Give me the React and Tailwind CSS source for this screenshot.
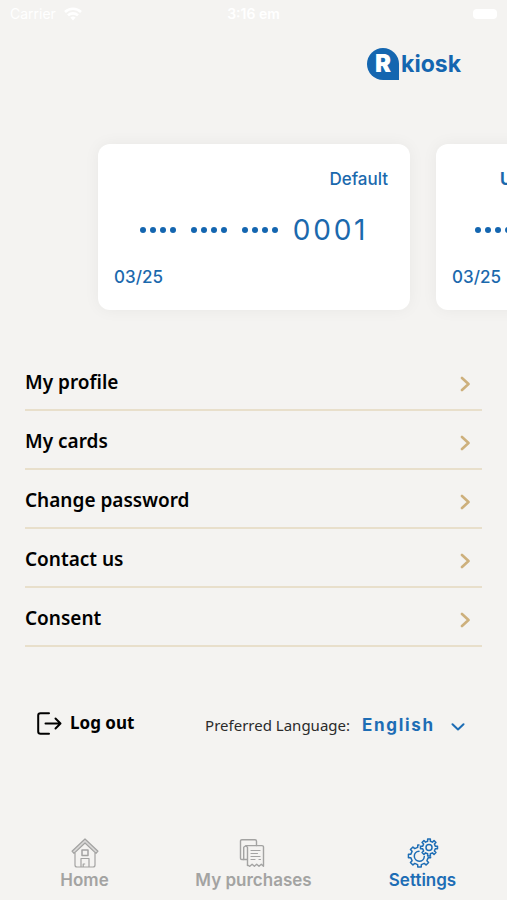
import React, { useState } from 'react';
import clsx from 'clsx';

const cards = [
  { id: 1, label: 'Default', digits: '0001', expiry: '03/25', isDefault: true },
  { id: 2, label: 'U', digits: '0002', expiry: '03/25', isDefault: false }
];

const menuItems = ['My profile', 'My cards', 'Change password', 'Contact us', 'Consent'];

// Closed outline of a cog wheel, centred on cx/cy
const gearPath = (cx, cy, inner, outer, teeth) => {
  const step = (Math.PI * 2) / teeth;
  const point = (radius, angle) =>
    `${(cx + radius * Math.cos(angle)).toFixed(2)} ${(cy + radius * Math.sin(angle)).toFixed(2)}`;
  let d = '';
  for (let i = 0; i < teeth; i++) {
    const a = i * step - Math.PI / 2;
    d += `${i === 0 ? 'M' : 'L'}${point(inner, a - step * 0.27)}`;
    d += `L${point(outer, a - step * 0.2)}L${point(outer, a + step * 0.2)}`;
    d += `L${point(inner, a + step * 0.27)}`;
  }
  return `${d}Z`;
};

const WifiIcon = () => (
  <svg viewBox="0 0 18 14" className="w-[18px] h-[14px]" fill="none" stroke="currentColor" strokeWidth="2.6">
    <path d="M1 5a11.5 11.5 0 0 1 16 0" />
    <path d="M4 8.4a7.2 7.2 0 0 1 10 0" />
    <path d="M6.4 10.6a3.8 3.8 0 0 1 5.2 0L9 13.4z" fill="currentColor" stroke="none" />
  </svg>
);

const HomeIcon = () => (
  <svg viewBox="0 0 28 30" className="w-7 h-[30px]" fill="none" stroke="currentColor" strokeWidth="1.2" strokeLinejoin="round">
    <path d="M14 1 1 13.2l2 2.2L14 5l11 10.4 2-2.2z" fill="currentColor" fillOpacity="0.35" />
    <path d="M4 15v12a2 2 0 0 0 2 2h16a2 2 0 0 0 2-2V15" />
    <rect x="11" y="12" width="6" height="5.5" strokeWidth="1.5" />
    <path d="M10 29v-8.5h8V29M12.2 29v-3h2" />
  </svg>
);

const ReceiptIcon = () => (
  <svg viewBox="0 0 26 30" className="w-[26px] h-[30px] mr-1" fill="none" stroke="currentColor" strokeWidth="1.4" strokeLinejoin="round" strokeLinecap="round">
    <path d="M4.700 21.500H2.800A1.300 1.300 0 0 1 1.500 20.200V3A1.300 1.300 0 0 1 2.800 1.700H16A1.500 1.500 0 0 1 17.500 3.200V7.500" />
    <path d="M8.500 27.500V9.500A2 2 0 0 0 4.700 9.500V21.500H8.500" />
    <path d="M6.700 7.600H23A1.500 1.500 0 0 1 24.500 9.100V28.300L22.300 26.300 20 28.300 17.700 26.300 15.400 28.300 13.100 26.300 10.800 28.300 8.500 27" />
    <path d="M12 12.500h9M12 15.500h6.500M12 18.500h9M12 21.500h4M20 21.500h1.500" strokeWidth="1.2" />
  </svg>
);

const GearsIcon = () => (
  <svg viewBox="0 0 32 30" className="w-8 h-[30px]" fill="none" stroke="currentColor" strokeWidth="1.5" strokeLinejoin="round" strokeLinecap="round">
    <defs>
      <clipPath id="big-gear">
        <path d="M0 0H12.500V10L21 18.500H32V30H0z" />
      </clipPath>
    </defs>
    <g clipPath="url(#big-gear)">
      <path d={gearPath(12.5, 18, 8.8, 11.2, 8)} />
    </g>
    <path d="M12 13.200a5 5 0 1 0 5.300 5.300" />
    <path d={gearPath(22, 9.5, 6.4, 8.6, 8)} />
    <circle cx="22" cy="9.500" r="3" />
  </svg>
);

const LogoutIcon = () => (
  <svg viewBox="0 0 25 23" className="w-[25px] h-[23px]" fill="none" stroke="currentColor" strokeWidth="2" strokeLinecap="round" strokeLinejoin="round">
    <path d="M12 1.200H3.500A2.300 2.300 0 0 0 1.200 3.500V19.500A2.300 2.300 0 0 0 3.500 21.800H12" />
    <path d="M8.500 11.500H23.500M18.500 6.500l5 5-5 5" />
  </svg>
);

const Logo = () => (
  <div className="flex items-center text-[#1466b0]">
    <div className="flex items-center justify-center w-8 h-8 rounded-full rounded-br-none bg-[#1466b0]">
      <span className="font-['Inter'] text-2xl leading-8 font-black text-white">R</span>
    </div>
    <span className="ml-0.5 font-['Inter'] text-[23px] leading-8 font-bold">kiosk</span>
  </div>
);

const Dots = () => (
  <span className="flex gap-1">
    {[0, 1, 2, 3].map((n) => (
      <span key={n} className="w-1.5 h-1.5 rounded-full bg-[#1466b0]" />
    ))}
  </span>
);

const PaymentCard = ({ card }) => (
  <div className="shrink-0 w-[312px] h-[166px] px-4 pt-[23px] rounded-xl bg-white text-[#1b69ad] shadow-[0_0_16px_rgba(0,0,0,0.05)]">
    <p
      className={clsx(
        "font-['Inter'] text-[17px] leading-6",
        card.isDefault ? 'pr-1.5 text-right font-medium' : 'pl-12 font-bold'
      )}
    >
      {card.label}
    </p>
    <div className="flex items-center justify-center gap-[15px] h-10 mt-[19px]">
      <Dots />
      <Dots />
      <Dots />
      <span className="font-['Inter'] text-[28px] leading-10 tracking-widest">{card.digits}</span>
    </div>
    <p className="mt-[15px] font-['Inter'] text-[17px] leading-6 font-medium">{card.expiry}</p>
  </div>
);

const tabs = [
  { name: 'Home', icon: HomeIcon },
  { name: 'My purchases', icon: ReceiptIcon },
  { name: 'Settings', icon: GearsIcon }
];

const App = () => {
  const [language, setLanguage] = useState('English');
  const [activeTab, setActiveTab] = useState('Settings');

  return (
    <div className="flex flex-col min-h-screen overflow-hidden bg-[#f4f3f1] font-['Noto_Sans',sans-serif] text-black">
      {/* Status bar */}
      <div className="grid grid-cols-3 items-center h-7 px-2.5 font-['Inter'] text-sm text-white">
        <div className="flex items-center gap-2">
          <span>Carrier</span>
          <WifiIcon />
        </div>
        <span className="text-center font-semibold">3:16 em</span>
        <div className="justify-self-end w-6 h-2.5 rounded-sm bg-white" />
      </div>

      <header className="flex justify-end pt-5 pr-[46px]">
        <Logo />
      </header>

      {/* Saved cards */}
      <section className="flex gap-[26px] mt-16 pl-[98px]">
        {cards.map((card) => (
          <PaymentCard key={card.id} card={card} />
        ))}
      </section>

      {/* Menu */}
      <nav className="flex flex-col mt-[42px] px-[25px]">
        {menuItems.map((item) => (
          <a
            key={item}
            href="#"
            className="flex items-center justify-between h-[59px] pt-0.5 pr-3 border-b-2 border-[#e8dfcb] text-[19px] leading-6 font-semibold"
          >
            {item}
            <svg viewBox="0 0 10 16" className="w-2.5 h-4 mt-1" fill="none" stroke="#cdb07c" strokeWidth="2.600" strokeLinecap="round" strokeLinejoin="round">
              <path d="M2 2l6.500 6L2 14" />
            </svg>
          </a>
        ))}
      </nav>

      <div className="flex items-center justify-between mt-[62px] pl-[37px] pr-10">
        <button className="flex items-center gap-2 text-[17px] leading-6 font-bold">
          <LogoutIcon />
          Log out
        </button>
        <div className="flex items-center pt-1">
          <label htmlFor="language" className="text-[15px] leading-6 text-[#2b2b2b]">
            Preferred Language:
          </label>
          <div className="relative ml-3">
            <select
              id="language"
              value={language}
              onChange={(e) => setLanguage(e.target.value)}
              className="appearance-none pr-8 bg-transparent font-['Inter'] text-[17px] leading-6 font-bold tracking-widest text-[#1d6db5]"
            >
              <option value="English">English</option>
            </select>
            <svg viewBox="0 0 14 8" className="absolute right-0.5 top-2.5 w-3.5 h-2 pointer-events-none" fill="none" stroke="#1d6db5" strokeWidth="2" strokeLinecap="round" strokeLinejoin="round">
              <path d="M1.500 1.200L7 6.500l5.500-5.300" />
            </svg>
          </div>
        </div>
      </div>

      {/* Bottom tabs */}
      <nav className="grid grid-cols-3 mt-auto pb-2">
        {tabs.map(({ name, icon: Icon }) => (
          <button
            key={name}
            onClick={() => setActiveTab(name)}
            className={clsx(
              "flex flex-col items-center font-['Inter'] text-[17px] leading-6 font-semibold",
              activeTab === name ? 'text-[#1d6db5]' : 'text-[#a3a3a2]'
            )}
          >
            <Icon />
            {name}
          </button>
        ))}
      </nav>
    </div>
  );
};

export default App;
